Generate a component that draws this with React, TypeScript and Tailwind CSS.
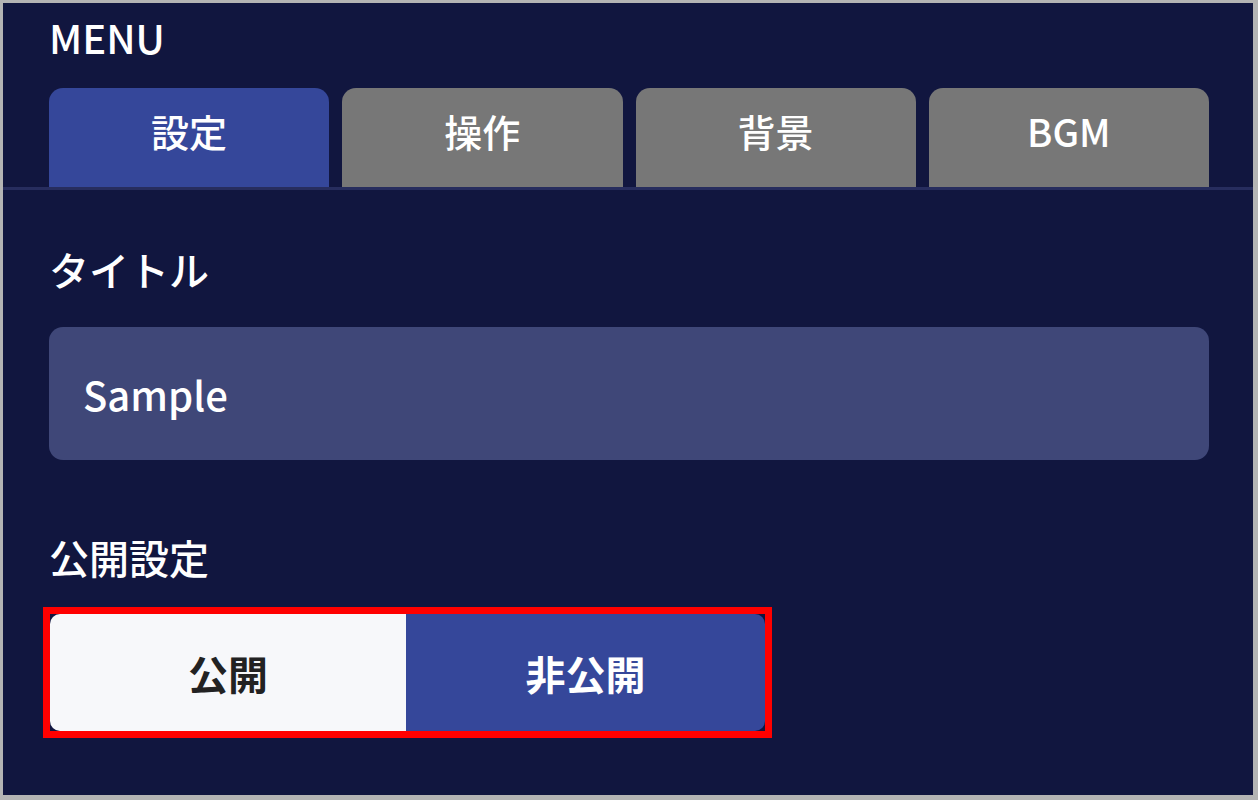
import React, { useState } from "react";

const tabs = ["設定", "操作", "背景", "BGM"];

const App = () => {
  const [active, setActive] = useState(0);
  const [isPublic, setIsPublic] = useState(false);

  return (
    <div className="w-[1258px] h-[800px] border-[#b4b4b4] border-t-[3px] border-l-[3px] border-r-[5px] border-b-[5px] bg-[#11163f] text-white font-['Noto_Sans_CJK_JP','Noto_Sans',sans-serif] font-medium overflow-hidden">
      <div className="pl-[46px] pt-[14px] text-[40px] leading-none">MENU</div>

      <div className="mt-[31px] flex gap-[13px] pl-[46px] pr-[44px] border-b-[3px] border-[#272d5e]">
        {tabs.map((t, i) => (
          <button
            key={t}
            onClick={() => setActive(i)}
            className={
              "flex-1 h-[99px] rounded-t-[14px] pt-[24px] text-[38px] leading-none text-white flex justify-center items-start " +
              (i === active ? "bg-[#35479a]" : "bg-[#777777]")
            }
          >
            {t}
          </button>
        ))}
      </div>

      <div className="pl-[46px] pr-[44px]">
        <div className="mt-[59px] text-[40px] leading-none">タイトル</div>
        <div className="mt-[38px] h-[133px] rounded-[14px] bg-[#3f4778] pl-[34px] flex items-center text-[40px]">
          Sample
        </div>

        <div className="mt-[77px] text-[40px] leading-none">公開設定</div>

        <div className="mt-[30px] -ml-[6px] w-[729px] border-[7px] border-[#ff0000]">
          <div className="flex h-[117px] rounded-[10px] overflow-hidden text-[40px] font-bold">
            <button
              onClick={() => setIsPublic(true)}
              className={
                "w-[356px] flex items-center justify-center " +
                (isPublic ? "bg-[#35479a] text-white" : "bg-[#f7f8fa] text-[#222222]")
              }
            >
              公開
            </button>
            <button
              onClick={() => setIsPublic(false)}
              className={
                "flex-1 flex items-center justify-center " +
                (isPublic ? "bg-[#f7f8fa] text-[#222222]" : "bg-[#35479a] text-white")
              }
            >
              非公開
            </button>
          </div>
        </div>
      </div>
    </div>
  );
};

export default App;
